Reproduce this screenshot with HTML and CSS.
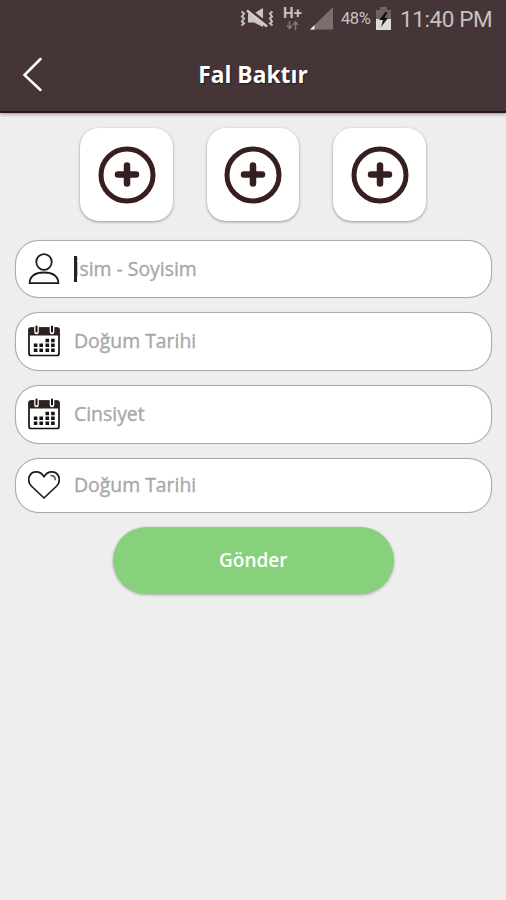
FILE: index.html
```html
<!DOCTYPE html>
<html lang="tr">
<head>
<meta charset="utf-8">
<title>Fal Baktır</title>
<link rel="stylesheet" href="styles.css">
</head>
<body>
<svg width="0" height="0" class="defs">
  <symbol id="plus" viewBox="0 0 58 58"><circle cx="29" cy="29" r="26" fill="none" stroke="#35201f" stroke-width="5"/><path d="M29 19.500v18M20 28.500h18" stroke="#35201f" stroke-width="6.500" stroke-linecap="round"/></symbol>
  <symbol id="calendar" viewBox="0 0 32 32">
    <rect x="1" y="3" width="30" height="27.500" rx="2" fill="#fff" stroke="#171112" stroke-width="1.700"/>
    <path d="M1 10.500V4q0-1.500 1.500-1.500h27Q31 2.500 31 4v6.500z" fill="#30201f"/>
    <path d="M8.500 2v5M24 2v5" stroke="#fff" stroke-width="4.600" stroke-linecap="round"/>
    <path d="M8.500 1.500v5M24 1.500v5" stroke="#171112" stroke-width="2" stroke-linecap="round"/>
    <path d="M17.500 15.500h3.600m2 0h3.600M5.800 20.300h3.600m2 0h3.600m2.500 0h3.600m2 0h3.600M5.800 25.300h3.600m2 0h3.600m2.500 0h3.600m2 0h3.600" stroke="#171112" stroke-width="3.500"/>
  </symbol>
</svg>
<header class="top">
  <div class="status">
    <svg class="mute" width="34" height="20" viewBox="0 0 34 20"><path d="M8 5.500h6L23 0v19l-9-4.500H8z" fill="#cbc5c5"/><path d="M9 1.500l19 15" stroke="#453536" stroke-width="3"/><path d="M7 2.500l20 16" stroke="#d3cdcd" stroke-width="2.400"/><path d="M1.500 3.500l2.500 2-2 3 2 2-2 3 2 2-2.500 2M32.500 3.500l-2.500 2 2 3-2 2 2 3-2 2 2.500 2" fill="none" stroke="#c6bfbf" stroke-width="2"/></svg>
    <div class="network"><span>H+</span><svg width="13" height="9" viewBox="0 0 13 9"><path d="M3.500 0v7M1 4.500L3.500 7.500 6 4.500M9.500 9V1.500M7 4l2.500-3L12 4" fill="none" stroke="#857777" stroke-width="1.500"/></svg></div>
    <svg class="signal" width="24" height="23" viewBox="0 0 24 23"><path d="M23 0v22.500H0z" fill="#7c6e6f"/><path d="M4.500 18v4.500H0z" fill="#eee"/></svg>
    <span class="percent">48%</span>
    <svg class="battery" width="15" height="23" viewBox="0 0 15 23"><path d="M4 0h7v3h4v9H0V3h4z" fill="#6f6263"/><path d="M0 12h15v11H0z" fill="#ded9d9"/><path d="M9.500 5L3 13h4l-2 7 7-9H8.500l3-6z" fill="#171112"/></svg>
    <span class="clock">11:40 PM</span>
  </div>
  <div class="bar">
    <svg class="back" width="22" height="38" viewBox="0 0 22 38"><path d="M18.500 3L2.500 19 18.500 34" fill="none" stroke="#fff" stroke-width="2.500" stroke-linecap="round"/></svg>
    <h1>Fal Baktır</h1>
  </div>
</header>
<main>
  <div class="photos">
    <button class="photo"><svg><use href="#plus"/></svg></button>
    <button class="photo"><svg><use href="#plus"/></svg></button>
    <button class="photo"><svg><use href="#plus"/></svg></button>
  </div>
  <form class="fields">
    <div class="field name">
      <svg viewBox="0 0 32 32"><ellipse cx="16" cy="9" rx="7.700" ry="7.800" fill="none" stroke="#211a1b" stroke-width="1.800"/><path d="M1.500 30.200C2 23 7 19.500 16 19.500s14 3.500 14.500 10.700z" fill="none" stroke="#211a1b" stroke-width="1.800" stroke-linejoin="round"/></svg>
      <span class="hint">İsim - Soyisim</span>
    </div>
    <div class="field"><svg><use href="#calendar"/></svg><span class="hint">Doğum Tarihi</span></div>
    <div class="field"><svg><use href="#calendar"/></svg><span class="hint">Cinsiyet</span></div>
    <div class="field love">
      <svg viewBox="0 0 32 32"><path d="M16 29L3.300 17C-2 11 1.500 2.800 8.300 2.800c3.500 0 6 2 7.700 5 1.700-3 4.200-5 7.700-5C30.500 2.800 34 11 28.700 17z" fill="none" stroke="#211a1b" stroke-width="1.700" stroke-linejoin="round"/><path d="M22.500 6.500c3 0 4.800 1.700 4.800 4.700" fill="none" stroke="#5d5556" stroke-width="1.500"/></svg>
      <span class="hint">Doğum Tarihi</span>
    </div>
    <button type="button" class="send">Gönder</button>
  </form>
</main>
</body>
</html>
```
FILE: styles.css
```css
* { box-sizing: border-box; }
body { margin: 0; min-height: 900px; background: #eee; font-family: "Open Sans", "Noto Sans", sans-serif; }
button { border: 0; padding: 0; font: inherit; }
svg { display: block; flex: none; }
.defs { position: absolute; }
.top { height: 113px; background: #453536; border-bottom: 2px solid #2b1518; box-shadow: 0 1px 4px rgba(0, 0, 0, .4); }
.status { height: 37px; display: flex; justify-content: flex-end; align-items: center; padding-right: 14px; color: #c8c0c1; font-family: Roboto, sans-serif; }
.mute { margin-right: 9px; margin-top: -2px; }
.network { width: 19px; margin-right: 8px; margin-top: -2px; display: flex; flex-direction: column; align-items: center; font: bold 15px/14px Roboto, sans-serif; gap: 1px; }
.signal { margin-right: 7px; }
.percent { width: 31px; font-size: 16.500px; letter-spacing: -.4px; margin-right: 4px; }
.battery { margin-right: 9px; }
.clock { width: 92px; font-size: 22.500px; white-space: nowrap; letter-spacing: -.4px; }
.bar { display: grid; grid-template-columns: 44px 1fr 44px; align-items: center; height: 75px; }
.back { margin-left: 22px; }
h1 { margin: 0; text-align: center; color: #fff; font-size: 22.800px; line-height: 30px; font-weight: 700; text-shadow: 1px 1px 1px #2b1518; }
.photos { display: flex; justify-content: center; gap: 34px; padding-top: 15px; }
.photo { width: 92.500px; height: 93px; border-radius: 19px; background: #fff; display: grid; place-items: center; box-shadow: 0 1px 3px rgba(0, 0, 0, .38); }
.photo svg { width: 58px; height: 58px; }
.fields { display: flex; flex-direction: column; gap: 14px; padding: 18.500px 14px 0 14.500px; }
.field { height: 59px; border: 1.500px solid #aaa; border-radius: 24px; background: #fff; display: flex; align-items: center; padding-left: 12.500px; box-shadow: 0 0 1px #bbb; }
.field svg { width: 32px; height: 32px; }
.field.name { height: 58px; }
.field.love { height: 55px; }
.hint { margin-left: 14px; color: #a8a8a8; font-size: 19.400px; -webkit-text-stroke: .35px #a8a8a8; line-height: 28px; white-space: nowrap; }
.name .hint { position: relative; }
.name .hint::before { content: ""; position: absolute; left: 0; top: 1px; width: 2.500px; height: 26px; background: #262021; }
.send { align-self: center; width: 281px; height: 67px; border-radius: 34px; background: #87d17d; color: #fff; font-size: 19px; font-weight: 600; box-shadow: 0 1px 3px rgba(0, 0, 0, .3); }
```
